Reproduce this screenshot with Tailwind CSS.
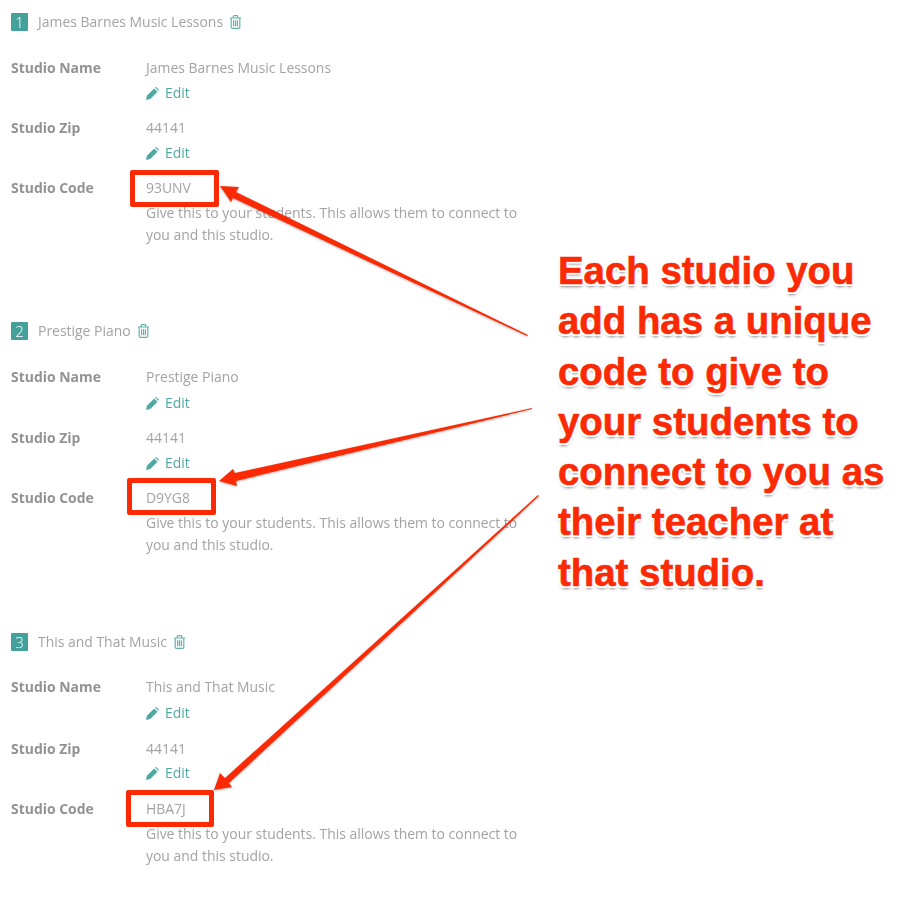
<!DOCTYPE html>
<html lang="en">
<head>
<meta charset="utf-8">
<title>Studios</title>
<script src="https://cdn.jsdelivr.net/npm/@tailwindcss/browser@4"></script>
</head>
<body class="bg-white">
<div class="relative w-[900px] h-[916px] overflow-hidden font-['Open_Sans',sans-serif] text-[13.95px] leading-[22px] text-[#a3a3a3]">
  <main class="pl-[11px] pt-[11px] w-[530px] blur-[0.35px]">

    <section class="h-[309px]">
      <div class="flex items-center h-[22px]">
        <span class="flex items-center justify-center w-[17px] h-[18px] rounded-[1px] bg-[#43a09a] text-white text-[15px] font-light mr-[10px]">1</span>
        <span>James Barnes Music Lessons</span>
        <svg class="ml-[7px] w-[11px] h-[14px] text-[#62b3ad]" viewBox="0 0 11 14" fill="none" stroke="currentColor" stroke-width="1.2"><path d="M0 3h11M3.3 3V1.4q0-.8.8-.8h2.8q.8 0 .8.8V3M1.2 3v9.2q0 1.2 1.2 1.2h6.2q1.2 0 1.2-1.2V3M3.6 5.2v6M5.5 5.2v6M7.4 5.2v6"/></svg>
      </div>
      <div class="grid grid-cols-[135px_1fr] mt-[24px]">
        <div class="font-bold text-[#929292]">Studio Name</div>
        <div>
          <div>James Barnes Music Lessons</div>
          <a class="flex items-center h-[22px] mt-[3px] text-[#4fa8a2]"><svg class="w-[13px] h-[13px] mr-[6px]" viewBox="0 0 13 13" fill="currentColor"><path d="M0 13l.9-4.2L8.2 1.5l3.3 3.3-7.3 7.3zM9.1.6l.4-.4q.5-.3 1 0l2.2 2.2q.4.5 0 1l-.4.4z"/></svg>Edit</a>
        </div>
      </div>
      <div class="grid grid-cols-[135px_1fr] mt-[13px]">
        <div class="font-bold text-[#929292]">Studio Zip</div>
        <div>
          <div>44141</div>
          <a class="flex items-center h-[22px] mt-[3px] text-[#4fa8a2]"><svg class="w-[13px] h-[13px] mr-[6px]" viewBox="0 0 13 13" fill="currentColor"><path d="M0 13l.9-4.2L8.2 1.5l3.3 3.3-7.3 7.3zM9.1.6l.4-.4q.5-.3 1 0l2.2 2.2q.4.5 0 1l-.4.4z"/></svg>Edit</a>
        </div>
      </div>
      <div class="grid grid-cols-[135px_1fr] mt-[13px]">
        <div class="font-bold text-[#929292]">Studio Code</div>
        <div>
          <div class="mb-[3px]">93UNV</div>
          <p>Give this to your students. This allows them to connect to you and this studio.</p>
        </div>
      </div>
    </section>

    <section class="h-[311px]">
      <div class="flex items-center h-[22px]">
        <span class="flex items-center justify-center w-[17px] h-[18px] rounded-[1px] bg-[#43a09a] text-white text-[15px] font-light mr-[10px]">2</span>
        <span>Prestige Piano</span>
        <svg class="ml-[7px] w-[11px] h-[14px] text-[#62b3ad]" viewBox="0 0 11 14" fill="none" stroke="currentColor" stroke-width="1.2"><path d="M0 3h11M3.3 3V1.4q0-.8.8-.8h2.8q.8 0 .8.8V3M1.2 3v9.2q0 1.2 1.2 1.2h6.2q1.2 0 1.2-1.2V3M3.6 5.2v6M5.5 5.2v6M7.4 5.2v6"/></svg>
      </div>
      <div class="grid grid-cols-[135px_1fr] mt-[24px]">
        <div class="font-bold text-[#929292]">Studio Name</div>
        <div>
          <div>Prestige Piano</div>
          <a class="flex items-center h-[22px] mt-[4px] text-[#4fa8a2]"><svg class="w-[13px] h-[13px] mr-[6px]" viewBox="0 0 13 13" fill="currentColor"><path d="M0 13l.9-4.2L8.2 1.5l3.3 3.3-7.3 7.3zM9.1.6l.4-.4q.5-.3 1 0l2.2 2.2q.4.5 0 1l-.4.4z"/></svg>Edit</a>
        </div>
      </div>
      <div class="grid grid-cols-[135px_1fr] mt-[13px]">
        <div class="font-bold text-[#929292]">Studio Zip</div>
        <div>
          <div>44141</div>
          <a class="flex items-center h-[22px] mt-[3px] text-[#4fa8a2]"><svg class="w-[13px] h-[13px] mr-[6px]" viewBox="0 0 13 13" fill="currentColor"><path d="M0 13l.9-4.2L8.2 1.5l3.3 3.3-7.3 7.3zM9.1.6l.4-.4q.5-.3 1 0l2.2 2.2q.4.5 0 1l-.4.4z"/></svg>Edit</a>
        </div>
      </div>
      <div class="grid grid-cols-[135px_1fr] mt-[13px]">
        <div class="font-bold text-[#929292]">Studio Code</div>
        <div>
          <div class="mb-[3px]">D9YG8</div>
          <p>Give this to your students. This allows them to connect to you and this studio.</p>
        </div>
      </div>
    </section>

    <section>
      <div class="flex items-center h-[22px]">
        <span class="flex items-center justify-center w-[17px] h-[18px] rounded-[1px] bg-[#43a09a] text-white text-[15px] font-light mr-[10px]">3</span>
        <span>This and That Music</span>
        <svg class="ml-[7px] w-[11px] h-[14px] text-[#62b3ad]" viewBox="0 0 11 14" fill="none" stroke="currentColor" stroke-width="1.2"><path d="M0 3h11M3.3 3V1.4q0-.8.8-.8h2.8q.8 0 .8.8V3M1.2 3v9.2q0 1.2 1.2 1.2h6.2q1.2 0 1.2-1.2V3M3.6 5.2v6M5.5 5.2v6M7.4 5.2v6"/></svg>
      </div>
      <div class="grid grid-cols-[135px_1fr] mt-[23px]">
        <div class="font-bold text-[#929292]">Studio Name</div>
        <div>
          <div>This and That Music</div>
          <a class="flex items-center h-[22px] mt-[4px] text-[#4fa8a2]"><svg class="w-[13px] h-[13px] mr-[6px]" viewBox="0 0 13 13" fill="currentColor"><path d="M0 13l.9-4.2L8.2 1.5l3.3 3.3-7.3 7.3zM9.1.6l.4-.4q.5-.3 1 0l2.2 2.2q.4.5 0 1l-.4.4z"/></svg>Edit</a>
        </div>
      </div>
      <div class="grid grid-cols-[135px_1fr] mt-[14px]">
        <div class="font-bold text-[#929292]">Studio Zip</div>
        <div>
          <div>44141</div>
          <a class="flex items-center h-[22px] mt-[2px] text-[#4fa8a2]"><svg class="w-[13px] h-[13px] mr-[6px]" viewBox="0 0 13 13" fill="currentColor"><path d="M0 13l.9-4.2L8.2 1.5l3.3 3.3-7.3 7.3zM9.1.6l.4-.4q.5-.3 1 0l2.2 2.2q.4.5 0 1l-.4.4z"/></svg>Edit</a>
        </div>
      </div>
      <div class="grid grid-cols-[135px_1fr] mt-[14px]">
        <div class="font-bold text-[#929292]">Studio Code</div>
        <div>
          <div class="mb-[3px]">HBA7J</div>
          <p>Give this to your students. This allows them to connect to you and this studio.</p>
        </div>
      </div>
    </section>
  </main>

  <!-- annotation layer -->
  <div class="absolute left-[130px] top-[170px] w-[89px] h-[37px] border-[5px] border-[#fb2a05] rounded-[2px]"></div>
  <div class="absolute left-[127px] top-[478px] w-[89px] h-[37px] border-[5px] border-[#fb2a05] rounded-[2px]"></div>
  <div class="absolute left-[126px] top-[790px] w-[88px] h-[37px] border-[5px] border-[#fb2a05] rounded-[2px]"></div>

  <svg class="absolute inset-0 w-[900px] h-[916px] drop-shadow-[0_1px_1px_rgba(0,0,0,0.3)]" viewBox="0 0 900 916" fill="#fb2a05">
    <polygon points="220,186 239,187 236,192 528,335 527,336 233,198 231,202"/>
    <polygon points="219,481 233,469 235,473 532,408 532,409 236,481 237,486"/>
    <polygon points="214,790 220,773 225,778 538,495 539,496 229,783 232,787"/>
  </svg>

  <div class="absolute left-[558px] top-[246px] font-['Liberation_Sans',sans-serif] font-bold text-[38.4px] leading-[50.3px] text-[#fb2a05] whitespace-nowrap [-webkit-text-stroke:0.6px_#fb2a05] [text-shadow:-2px_0_0_#fff,2px_0_0_#fff,0_-2px_0_#fff,0_2px_0_#fff,-2px_-2px_0_#fff,2px_-2px_0_#fff,-2px_2px_0_#fff,2px_2px_0_#fff,0_3px_3px_rgba(0,0,0,0.45)]">Each studio you<br>add has a unique<br>code to give to<br>your students to<br>connect to you as<br>their teacher at<br>that studio.</div>
</div>
</body>
</html>
